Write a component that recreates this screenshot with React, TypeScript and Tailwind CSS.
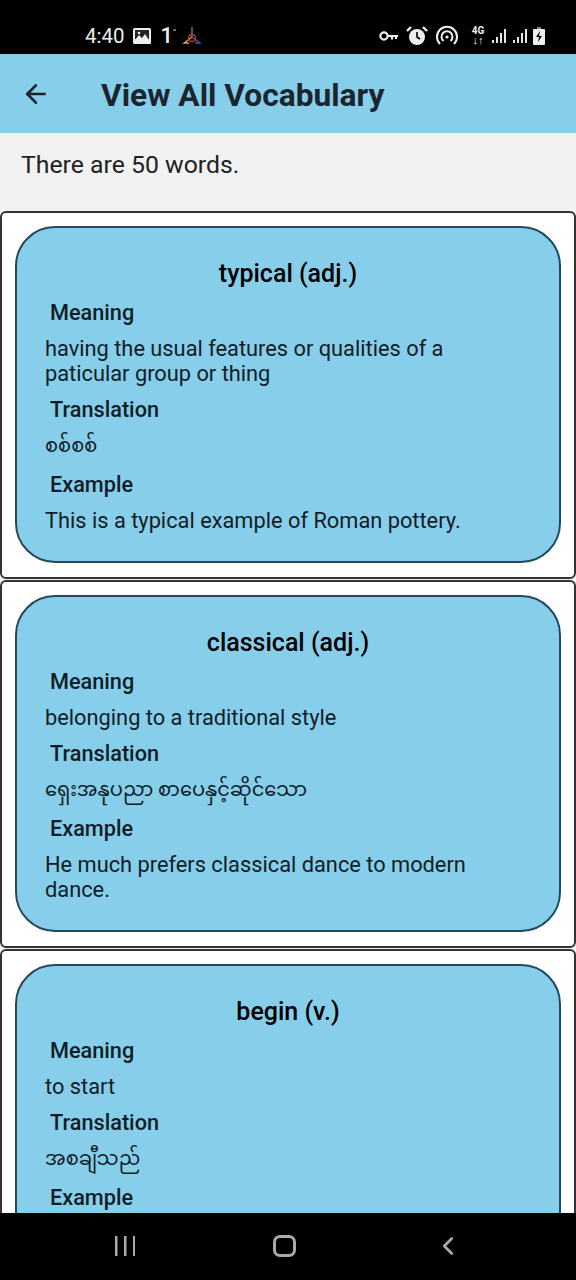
import { ArrowLeft, ChevronLeft } from "lucide-react";

interface Word {
  title: string;
  meaning: string;
  translation: string;
  example: string;
}

const words: Word[] = [
  {
    title: "typical (adj.)",
    meaning: "having the usual features or qualities of a paticular group or thing",
    translation: "စစ်စစ်",
    example: "This is a typical example of Roman pottery.",
  },
  {
    title: "classical (adj.)",
    meaning: "belonging to a traditional style",
    translation: "ရှေးအနုပညာ စာပေနှင့်ဆိုင်သော",
    example: "He much prefers classical dance to modern dance.",
  },
  {
    title: "begin (v.)",
    meaning: "to start",
    translation: "အစချီသည်",
    example: "",
  },
];

function Signal() {
  return (
    <svg width="18" height="16" viewBox="0 0 18 16" fill="#e5e5e5">
      <rect x="1" y="12" width="2" height="3" />
      <rect x="5" y="9" width="2" height="6" />
      <rect x="9" y="5" width="2" height="10" />
      <rect x="13" y="1" width="2" height="14" />
    </svg>
  );
}

function StatusBar() {
  return (
    <div className="flex h-[54px] shrink-0 items-center justify-between bg-black pl-[85px] pr-[31px] pt-[18px] text-[#eeeeee]">
      <div className="flex items-center">
        <span className="text-[20.5px] leading-none">4:40</span>
        <svg className="ml-[8px]" width="18" height="16" viewBox="0 0 18 16">
          <rect width="18" height="16" rx="1.5" fill="#eeeeee" />
          <rect x="2" y="2" width="14" height="9" fill="#222222" />
          <path d="M2 12l4-5 3 3 3-4 4 6v3H2z" fill="#eeeeee" />
          <circle cx="6" cy="5" r="1.3" fill="#eeeeee" />
        </svg>
        <span className="ml-[10px] text-[22px] font-medium leading-none">1</span>
        <span className="mb-[8px] text-[8px] font-bold leading-none">°</span>
        <svg className="ml-[6px]" width="20" height="22" viewBox="0 0 20 22" fill="none" strokeWidth="1.3">
          <path d="M10 2v10" stroke="#4a90c8" />
          <path d="M10 12l-8 6h5" stroke="#e0a050" />
          <path d="M10 12l8 6h-5" stroke="#3a5fa8" />
          <circle cx="10" cy="13" r="3.5" stroke="#c83a3a" />
        </svg>
      </div>
      <div className="flex items-center">
        <svg width="20" height="12" viewBox="0 0 20 12" fill="none" stroke="#eeeeee">
          <circle cx="5" cy="6" r="3.6" strokeWidth="2.2" />
          <path d="M9 6h10M13 6v3.5M17 6v3" strokeWidth="2.2" />
        </svg>
        <svg className="ml-[7px]" width="22" height="22" viewBox="0 0 22 22" fill="#eeeeee">
          <circle cx="11" cy="12" r="8" />
          <path d="M11 7v5l3 2" stroke="#000000" strokeWidth="1.6" fill="none" />
          <path d="M1 6l4-4M21 6l-4-4" stroke="#eeeeee" strokeWidth="2.4" />
        </svg>
        <svg className="ml-[7px]" width="24" height="24" viewBox="0 0 24 24" fill="none" stroke="#eeeeee" strokeWidth="2">
          <path d="M5 20a10 10 0 1 1 14 0" />
          <path d="M8.5 17a5.5 5.5 0 1 1 7 0" />
          <circle cx="12" cy="13" r="1.6" fill="#eeeeee" stroke="none" />
        </svg>
        <div className="ml-[12px] flex w-[14px] flex-col items-center text-[10px] font-bold leading-[10px]">
          <span>4G</span>
          <span className="text-[11px]">↓↑</span>
        </div>
        <div className="ml-[6px] flex items-center gap-[3px]">
          <Signal />
          <Signal />
        </div>
        <svg className="ml-[3px]" width="12" height="18" viewBox="0 0 12 18">
          <rect x="4" y="0" width="4" height="2" fill="#888888" />
          <rect x="0" y="2" width="12" height="16" rx="1" fill="#eeeeee" />
          <path d="M7 4L3 10h3l-1 5 4-6H6z" fill="#000000" />
        </svg>
      </div>
    </div>
  );
}

function WordCard({ word }: { word: Word }) {
  return (
    <div className="h-[368px] shrink-0 rounded-[6px] border-2 border-[#333333] bg-white px-[13px] pt-[13px]">
      <div className="h-[337px] rounded-[40px] border-2 border-[#25495c] bg-[#87ceeb] px-[28px] pt-[30px] text-[#101c26]">
        <h2 className="text-center text-[25px] font-medium leading-[32px] text-black">{word.title}</h2>
        <h3 className="mt-[7px] pl-[5px] text-[21.7px] font-medium leading-[32px]">Meaning</h3>
        <p className="mt-[7px] pr-[40px] text-[21.8px] leading-[25px]">{word.meaning}</p>
        <h3 className="mt-[8px] pl-[5px] text-[21.7px] font-medium leading-[32px]">Translation</h3>
        <p className="mt-[2px] text-[19.4px] leading-[36px]">{word.translation}</p>
        <h3 className="mt-[5px] pl-[5px] text-[21.7px] font-medium leading-[32px]">Example</h3>
        <p className="mt-[7px] pr-[40px] text-[21.8px] leading-[25px]">{word.example}</p>
      </div>
    </div>
  );
}

export default function App() {
  return (
    <div
      className="flex h-[1280px] w-[576px] flex-col overflow-hidden bg-[#f2f2f2]"
      style={{ fontFamily: 'Roboto, "Noto Sans Myanmar", "Noto Sans", sans-serif' }}
    >
      <StatusBar />

      {/* Header */}
      <div className="flex h-[79px] shrink-0 items-center bg-[#87ceeb] pl-[21px] text-[#1a2530]">
        <ArrowLeft size={30} strokeWidth={2} />
        <h1 className="ml-[50px] mt-[5px] text-[31.7px] font-bold">View All Vocabulary</h1>
      </div>

      <div className="flex h-[78px] shrink-0 items-center pb-[15px] pl-[21px] text-[24.8px] text-[#222222]">
        There are 50 words.
      </div>

      {/* Cards */}
      <div className="flex min-h-0 flex-1 flex-col gap-[1px] overflow-hidden">
        {words.map((word) => (
          <WordCard key={word.title} word={word} />
        ))}
      </div>

      {/* Nav bar */}
      <div className="flex h-[67px] shrink-0 items-center justify-between bg-black pb-[2px] pl-[115px] pr-[116px]">
        <svg width="20" height="20" viewBox="0 0 20 20" fill="#aaaaaa">
          <rect x="0" y="0" width="2.5" height="20" />
          <rect x="9" y="0" width="2.5" height="20" />
          <rect x="18" y="0" width="2.5" height="20" />
        </svg>
        <div className="h-[22px] w-[23px] rounded-[7px] border-[3px] border-[#aaaaaa]" />
        <ChevronLeft size={30} color="#aaaaaa" strokeWidth={2.2} className="-mr-[3px]" />
      </div>
    </div>
  );
}
